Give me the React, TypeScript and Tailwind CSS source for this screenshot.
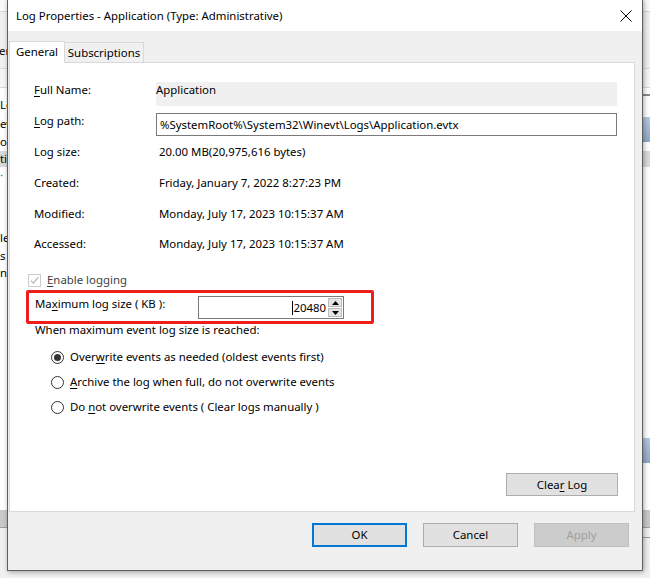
import React from "react";

function Key({ children }: { children: React.ReactNode }) {
  return <span className="underline decoration-1 underline-offset-2">{children}</span>;
}

function Radio({ checked, children }: { checked?: boolean; children: React.ReactNode }) {
  return (
    <div className="flex h-[16px] items-center pl-[41px]">
      <span className="flex h-[13px] w-[13px] items-center justify-center rounded-full border border-[#333333] bg-white">
        {checked && <span className="h-[7px] w-[7px] rounded-full bg-[#333333]" />}
      </span>
      <span className="ml-[6px]">{children}</span>
    </div>
  );
}

function WinButton({
  children,
  variant,
}: {
  children: React.ReactNode;
  variant?: "default" | "disabled";
}) {
  return (
    <button
      className={
        variant === "default"
          ? "flex h-[24px] w-[95px] items-center justify-center border-2 border-[#0078d7] bg-[#e1e1e1]"
          : variant === "disabled"
          ? "flex h-[24px] w-[95px] items-center justify-center border border-[#bfbfbf] bg-[#cccccc] text-[#a0a0a0]"
          : "flex h-[24px] w-[95px] items-center justify-center border border-[#adadad] bg-[#e1e1e1]"
      }
    >
      <span>{children}</span>
    </button>
  );
}

function InfoRow({ label, value, top }: { label: React.ReactNode; value: string; top: string }) {
  return (
    <div className={`flex h-[16px] ${top}`}>
      <div className="w-[149px] pl-[24px]">{label}</div>
      <div>{value}</div>
    </div>
  );
}

// window partly hidden behind the dialog
function Backdrop() {
  return (
    <div className="absolute inset-0 flex flex-col bg-white">
      <div className="h-[12px] border-b border-[#d5d5d5] bg-[#fafafa]" />
      <div className="flex h-[56px] items-center bg-[#f0f0f0] pt-[22px]">
        <span className="-ml-[1px]">er</span>
      </div>
      <div className="h-[20px] border-y border-[#d9d9d9] bg-[#f5f5f5]" />
      <div className="flex flex-col pt-[7px]">
        <div className="h-[19px] leading-[19px]">Lo</div>
        <div className="h-[19px] leading-[19px]">ew</div>
        <div className="h-[18px] leading-[18px]">og</div>
        <div className="h-[16px] bg-[#d9d9d9] leading-[16px]">ti</div>
        <div className="h-[16px] leading-[16px] text-[#0066cc]">·</div>
        <div className="h-[46px]" />
        <div className="h-[18px] leading-[18px]">le</div>
        <div className="h-[18px] leading-[18px]">s</div>
        <div className="h-[16px] leading-[16px]">ns</div>
      </div>
      <div className="flex-1" />
      <div className="h-[17px] bg-[#c9c9c9]" />
      <div className="h-[1px] bg-[#a0a0a0]" />
      <div className="h-[50px] bg-[#f0f0f0]" />
      <div className="absolute right-0 top-[94px] h-[2px] w-[8px] bg-[#8a8a8a]" />
      <div className="absolute right-0 top-[117px] h-[25px] w-[8px] bg-gradient-to-b from-[#b3c8df] to-[#8fa9c7]" />
      <div className="absolute right-0 top-[438px] h-[25px] w-[8px] bg-gradient-to-b from-[#b3c8df] to-[#8fa9c7]" />
      <div className="absolute right-0 top-[537px] h-[1px] w-[8px] bg-[#a0a0a0]" />
    </div>
  );
}

export default function App() {
  return (
    <div className="relative h-[578px] w-[650px] overflow-hidden bg-[#f0f0f0] font-['Noto_Sans',sans-serif] text-[11.4px] leading-[16px] text-black">
      <Backdrop />
      <div className="absolute left-[7px] top-[-1px] flex h-[572px] w-[636px] flex-col border border-[#5f5f5f] bg-[#f0f0f0] shadow-[1px_1px_5px_rgba(0,0,0,0.35)]">
        <div className="flex h-[31px] items-center bg-white pl-[8px] pr-[10px]">
          <span className="flex-1">Log Properties - Application (Type: Administrative)</span>
          <svg width="12" height="12" viewBox="0 0 12 12" className="mt-[1px]">
            <path d="M0.5 0.5 L11.5 11.5 M11.5 0.5 L0.5 11.5" stroke="#000" strokeWidth="1" />
          </svg>
        </div>

        <div className="mt-[10px] flex h-[21px] items-end pl-[1px]">
          <div className="relative z-10 -mb-[1px] flex h-[22px] w-[56px] items-center justify-center border border-b-0 border-[#d9d9d9] bg-white pb-[1px]">
            General
          </div>
          <div className="flex h-[20px] w-[79px] items-center justify-center border border-b-0 border-l-0 border-[#d9d9d9] bg-[#f0f0f0]">
            Subscriptions
          </div>
        </div>

        <div className="ml-[1px] flex h-[450px] w-[626px] flex-col border border-[#d9d9d9] bg-white">
          <div className="mt-[19px] flex h-[24px]">
            <div className="w-[146px] pl-[24px]">
              <Key>F</Key>ull Name:
            </div>
            <div className="mr-[17px] flex-1 bg-[#f0f0f0]">Application</div>
          </div>
          <div className="mt-[7px] flex h-[23px]">
            <div className="w-[146px] pl-[24px]">
              <Key>L</Key>og path:
            </div>
            <div className="mr-[17px] flex flex-1 items-center border border-[#7a7a7a] pl-[3px]">
              <span>%SystemRoot%\System32\Winevt\Logs\Application.evtx</span>
            </div>
          </div>
          <InfoRow label="Log size:" value="20.00 MB(20,975,616 bytes)" top="mt-[8px]" />
          <InfoRow label="Created:" value="Friday, January 7, 2022 8:27:23 PM" top="mt-[15px]" />
          <InfoRow label="Modified:" value="Monday, July 17, 2023 10:15:37 AM" top="mt-[15px]" />
          <InfoRow label="Accessed:" value="Monday, July 17, 2023 10:15:37 AM" top="mt-[14px]" />

          <div className="mt-[20px] flex h-[16px] items-center pl-[18px]">
            <span className="flex h-[13px] w-[13px] items-center justify-center border border-[#cccccc] bg-white">
              <svg width="9" height="9" viewBox="0 0 9 9">
                <path d="M0.8 4.6 L3.3 7.1 L8.2 1.4" fill="none" stroke="#b4b4b4" strokeWidth="1.2" />
              </svg>
            </span>
            <span className="ml-[6px] text-[#404040]">
              <Key>E</Key>nable logging
            </span>
          </div>

          <div className="ml-[16px] mt-[2px] flex h-[34px] w-[348px] rounded-[2px] border-[3px] border-[#f01d1d]">
            <div className="mt-[3px] h-[16px] w-[169px] pl-[6px]">
              Ma<Key>x</Key>imum log size ( KB ):
            </div>
            <div className="mt-[3px] flex h-[23px] w-[146px] items-center border border-[#7a7a7a] bg-white pr-[1px]">
              <div className="flex flex-1 items-center justify-end pr-[2px]">
                <span className="h-[14px] w-[1px] bg-black" />
                <span>20480</span>
              </div>
              <div className="flex h-[19px] w-[14px] flex-col gap-[1px]">
                <div className="flex flex-1 items-center justify-center border border-[#bcbcbc] bg-[#e5e5e5]">
                  <svg width="7" height="4" viewBox="0 0 7 4">
                    <path d="M0 4 L3.5 0 L7 4 Z" fill="#000" />
                  </svg>
                </div>
                <div className="flex flex-1 items-center justify-center border border-[#bcbcbc] bg-[#e5e5e5]">
                  <svg width="7" height="4" viewBox="0 0 7 4">
                    <path d="M0 0 L3.5 4 L7 0 Z" fill="#000" />
                  </svg>
                </div>
              </div>
            </div>
          </div>

          <div className="-mt-[2px] h-[16px] pl-[25px]">When maximum event log size is reached:</div>

          <div className="mt-[11px] flex flex-col gap-[9px]">
            <Radio checked>
              Over<Key>w</Key>rite events as needed (oldest events first)
            </Radio>
            <Radio>
              <Key>A</Key>rchive the log when full, do not overwrite events
            </Radio>
            <Radio>
              Do <Key>n</Key>ot overwrite events ( Clear logs manually )
            </Radio>
          </div>

          <div className="mb-[15px] mr-[16px] mt-auto flex h-[23px] w-[112px] items-center justify-center self-end border border-[#adadad] bg-[#e1e1e1]">
            <span>
              Clea<Key>r</Key> Log
            </span>
          </div>
        </div>

        <div className="mt-[11px] flex justify-end gap-[16px] pr-[13px]">
          <WinButton variant="default">OK</WinButton>
          <WinButton>Cancel</WinButton>
          <WinButton variant="disabled">Apply</WinButton>
        </div>
      </div>
    </div>
  );
}
